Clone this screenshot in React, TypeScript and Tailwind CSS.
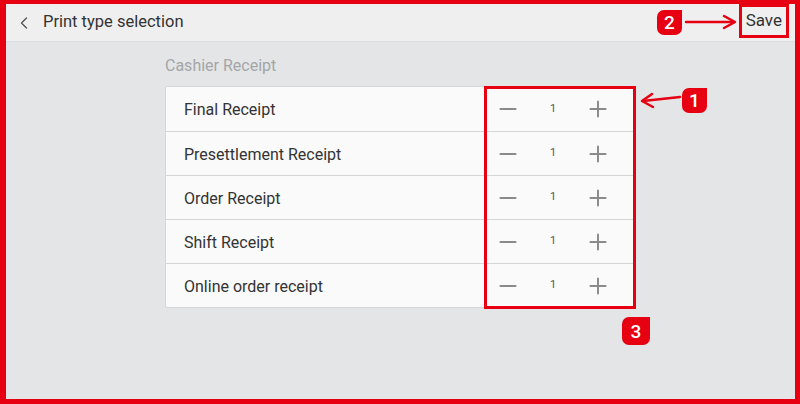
import { ChevronLeft, Minus, Plus } from 'lucide-react';

const RECEIPTS = ['Final Receipt', 'Presettlement Receipt', 'Order Receipt', 'Shift Receipt', 'Online order receipt'];

function Badge({ n, className }: { n: number; className: string }) {
  return (
    <div
      className={`absolute flex items-center justify-center rounded-[7px] rounded-tr-none bg-[#e60012] text-white text-[19px] font-medium leading-none ${className}`}
    >
      {n}
    </div>
  );
}

export default function App() {
  return (
    <div
      className="relative w-[800px] h-[404px] box-border border-t-4 border-l-[6px] border-r-[5px] border-b-[5px] border-[#e60012] bg-[#e3e5e7] flex flex-col overflow-hidden"
      style={{ fontFamily: 'Roboto, "Liberation Sans", sans-serif' }}
    >
      {/* header */}
      <div className="h-[38px] shrink-0 flex items-center bg-[#efefef] border-b border-[#dadcde] pl-[8px] pr-[6px]">
        <ChevronLeft size={20} strokeWidth={1.6} className="text-[#555]" />
        <span className="ml-[9px] text-[16.5px] text-[#333]">Print type selection</span>
        <div className="ml-auto mt-[-3px] h-[34px] px-[4px] border-[3px] border-[#e60012] flex items-center text-[17px] text-[#333]">
          Save
        </div>
      </div>

      {/* body */}
      <div className="flex-1 flex justify-center">
        <div className="w-[471px] pt-[14px]">
          <div className="text-[16px] leading-[20px] text-[#a4a6a8]">Cashier Receipt</div>
          <div className="relative mt-[10px] bg-[#fafafa] border border-[#d4d6d8] rounded-[2px]">
            {RECEIPTS.map((name, i) => (
              <div
                key={name}
                className={`h-[44px] flex items-center ${i > 0 ? 'border-t border-[#d6d6d6]' : ''}`}
              >
                <span className="pl-[18px] pt-[2px] text-[16px] text-[#333] flex-1">{name}</span>
                <div className="w-[151px] flex items-center justify-between pl-[11px] pr-[24px]">
                  <Minus size={26} strokeWidth={1.8} className="text-[#8a8a8a]" />
                  <span className="text-[11px] text-[#555]">1</span>
                  <Plus size={26} strokeWidth={1.8} className="text-[#8a8a8a]" />
                </div>
              </div>
            ))}
            <div className="absolute right-[-1px] top-[-1px] bottom-[-2px] w-[152px] border-[3px] border-[#e60012]" />
          </div>
        </div>
      </div>

      {/* annotations */}
      <Badge n={2} className="left-[651px] top-[6px] w-[25px] h-[25px]" />
      <Badge n={1} className="left-[676px] top-[84px] w-[25px] h-[25px]" />
      <Badge n={3} className="left-[616px] top-[313px] w-[28px] h-[28px]" />
      <svg className="absolute left-0 top-0 pointer-events-none" width="789" height="395">
        <g stroke="#e60012" strokeWidth="2.5" fill="none" strokeLinecap="round" strokeLinejoin="round">
          <path d="M680 18 H728" />
          <path d="M718 12 L729 18 L718 24" />
          <path d="M674 93 L637 97" />
          <path d="M646 90 L636 97 L647 103" />
        </g>
      </svg>
    </div>
  );
}
